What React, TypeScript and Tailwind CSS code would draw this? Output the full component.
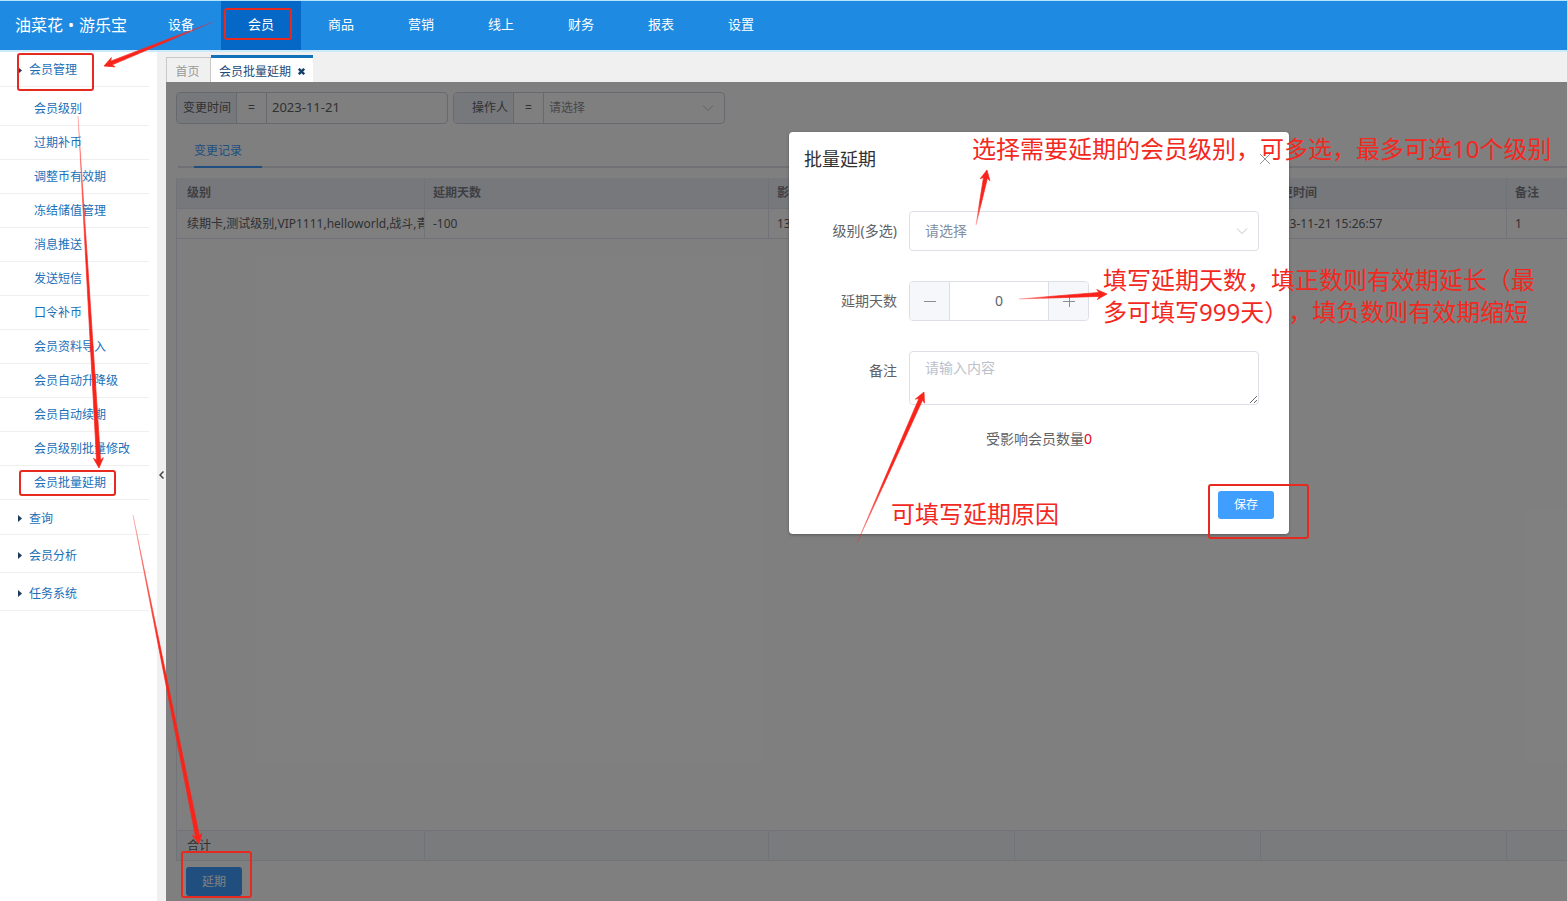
import { useState } from "react";

interface Column {
    title: string;
    width: number;
    value: string;
}

interface Point {
    x: number;
    y: number;
}

interface Box {
    x: number;
    y: number;
    width: number;
    height: number;
}

const navItems = ["设备", "会员", "商品", "营销", "线上", "财务", "报表", "设置"];

const memberMenu = [
    "会员级别",
    "过期补币",
    "调整币有效期",
    "冻结储值管理",
    "消息推送",
    "发送短信",
    "口令补币",
    "会员资料导入",
    "会员自动升降级",
    "会员自动续期",
    "会员级别批量修改",
    "会员批量延期",
];

const columns: Column[] = [
    { title: "级别", width: 248, value: "续期卡,测试级别,VIP1111,helloworld,战斗,青" },
    { title: "延期天数", width: 344, value: "-100" },
    { title: "影响会员数", width: 246, value: "13" },
    { title: "操作人", width: 246, value: "" },
    { title: "变更时间", width: 246, value: "2023-11-21 15:26:57" },
    { title: "备注", width: 246, value: "1" },
];

const boxes: Box[] = [
    { x: 225, y: 9, width: 66, height: 30 },
    { x: 18, y: 54, width: 75, height: 36 },
    { x: 20, y: 471, width: 95, height: 24 },
    { x: 182, y: 852, width: 69, height: 45 },
    { x: 1209, y: 485, width: 99, height: 53 },
];

const arrows: { from: Point; to: Point }[] = [
    { from: { x: 213, y: 22 }, to: { x: 104, y: 66 } },
    { from: { x: 78, y: 116 }, to: { x: 99, y: 468 } },
    { from: { x: 133, y: 515 }, to: { x: 199, y: 844 } },
    { from: { x: 976, y: 225 }, to: { x: 987, y: 170 } },
    { from: { x: 1019, y: 299 }, to: { x: 1107, y: 294 } },
    { from: { x: 857, y: 543 }, to: { x: 924, y: 392 } },
];

function Chevron({ className }: { className: string }) {
    return (
        <svg className={`pointer-events-none absolute h-3 w-3 ${className}`} viewBox="0 0 12 12" fill="none" stroke="#c0c4cc">
            <path d="M1 3.5 6 8.5 11 3.5" />
        </svg>
    );
}

// Tapered arrow: a sharp tail that widens up to a barbed head
function Arrow({ id, from, to }: { id: string; from: Point; to: Point }) {
    const length = Math.hypot(to.x - from.x, to.y - from.y);
    const ux = (to.x - from.x) / length;
    const uy = (to.y - from.y) / length;
    const at = (back: number, side: number) => `${to.x - ux * back - uy * side},${to.y - uy * back + ux * side}`;
    const points = [`${from.x},${from.y}`, at(8, 2), at(10, 5), at(0, 0), at(10, -5), at(8, -2)].join(" ");

    return (
        <>
            <linearGradient id={id} gradientUnits="userSpaceOnUse" x1={from.x} y1={from.y} x2={to.x} y2={to.y}>
                <stop offset="0" stopColor="#f8241b" stopOpacity="0.25" />
                <stop offset="0.4" stopColor="#f8241b" />
            </linearGradient>
            <polygon points={points} fill={`url(#${id})`} stroke={`url(#${id})`} strokeWidth="0.7" />
        </>
    );
}

function Annotations() {
    const noteClass = "absolute whitespace-nowrap text-2xl leading-8 text-[#f3281e] [text-spacing-trim:space-all]";

    return (
        <div className="pointer-events-none absolute inset-0 overflow-hidden">
            <svg className="absolute inset-0 h-full w-full">
                {boxes.map((b) => (
                    <rect key={`${b.x}-${b.y}`} {...b} rx="2" fill="none" stroke="#e62a20" strokeWidth="2" />
                ))}
                {arrows.map((a, i) => (
                    <Arrow key={i} id={`arrow-${i}`} from={a.from} to={a.to} />
                ))}
            </svg>
            <p className={`${noteClass} left-[972px] top-[133px]`}>选择需要延期的会员级别，可多选，最多可选10个级别</p>
            <p className={`${noteClass} left-[1103px] top-[264px]`}>
                填写延期天数，填正数则有效期延长（最
                <br />
                多可填写999天），填负数则有效期缩短
            </p>
            <p className={`${noteClass} left-[891px] top-[498px]`}>可填写延期原因</p>
        </div>
    );
}

function Header() {
    return (
        <header className="flex h-[50px] shrink-0 border-t border-[#b5e4fa] bg-[#1e8ae2] text-white">
            <div className="flex w-[141px] items-center gap-[5px] pb-0.5 pl-[15px] text-base">
                <span>油菜花</span>
                <span>•</span>
                <span>游乐宝</span>
            </div>
            <nav className="flex text-[13px]">
                {navItems.map((item) => (
                    <a
                        key={item}
                        href="#"
                        className={`flex w-20 items-center justify-center pb-0.5 ${item === "会员" ? "bg-[#0668c6]" : ""}`}
                    >
                        {item}
                    </a>
                ))}
            </nav>
        </header>
    );
}

function MenuGroup({ title, className }: { title: string; className: string }) {
    return (
        <a href="#" className={`flex items-center gap-[7px] border-b border-[#efefef] pl-[18px] ${className}`}>
            <svg className="h-[7px] w-1" viewBox="0 0 4 7" fill="#1c3c5a">
                <path d="M0 0 4 3.5 0 7Z" />
            </svg>
            {title}
        </a>
    );
}

function Sidebar() {
    return (
        <aside className="w-[157px] shrink-0 bg-white pr-2 text-[#1a6fb8]">
            <MenuGroup title="会员管理" className="h-[35px] pt-0.5" />
            <ul className="pb-px pt-[5px]">
                {memberMenu.map((item) => (
                    <li key={item} className="h-[34px] border-b border-[#efefef]">
                        <a href="#" className="flex h-full items-center pl-[34px]">
                            {item}
                        </a>
                    </li>
                ))}
            </ul>
            <MenuGroup title="查询" className="h-[34px] pt-0.5" />
            <MenuGroup title="会员分析" className="h-[38px] pt-1" />
            <MenuGroup title="任务系统" className="h-[38px] pt-1" />
        </aside>
    );
}

function Filters() {
    const groupClass = "flex h-8 w-[272px] overflow-hidden rounded border border-[#cfd3de]";
    const labelClass = "flex w-[60px] items-center justify-end border-r border-[#cfd3de] bg-[#eef0f7] pr-[5px]";
    const equalClass = "flex w-[30px] items-center justify-center border-r border-[#cfd3de]";

    return (
        <div className="flex gap-[5px]">
            <div className={groupClass}>
                <label htmlFor="change-date" className={labelClass}>变更时间</label>
                <span className={equalClass}>=</span>
                <input id="change-date" defaultValue="2023-11-21" className="min-w-0 flex-1 px-[5px] text-[13px] outline-none" />
            </div>
            <div className={groupClass}>
                <label htmlFor="operator" className={labelClass}>操作人</label>
                <span className={equalClass}>=</span>
                <div className="relative flex-1">
                    <select id="operator" className="h-full w-full appearance-none px-[5px] text-[#8c8f96] outline-none">
                        <option>请选择</option>
                    </select>
                    <Chevron className="right-[10px] top-[9px]" />
                </div>
            </div>
        </div>
    );
}

function RecordTable() {
    const cellClass = "truncate border-b border-r border-[#e4e7f0] text-left text-clip pl-2 first:pl-[10px]";

    return (
        <div className="min-h-0 flex-1 overflow-hidden border-l border-[#e4e7f0]">
            <table className="h-full w-[1576px] table-fixed border-separate border-spacing-0">
                <colgroup>
                    {columns.map((c) => (
                        <col key={c.title} style={{ width: c.width }} />
                    ))}
                </colgroup>
                <thead className="bg-[#eef0f8] text-[#7d8087]">
                    <tr className="h-[31px]">
                        {columns.map((c) => (
                            <th key={c.title} className={`${cellClass} font-bold`}>{c.title}</th>
                        ))}
                    </tr>
                </thead>
                <tbody>
                    <tr className="h-[30px]">
                        {columns.map((c) => (
                            <td key={c.title} className={cellClass}>{c.value}</td>
                        ))}
                    </tr>
                    <tr>
                        <td colSpan={columns.length} className="border-b border-[#e4e7f0]" />
                    </tr>
                </tbody>
                <tfoot className="bg-[#f5f7fa]">
                    <tr className="h-[30px]">
                        {columns.map((c, i) => (
                            <td key={c.title} className={cellClass}>{i === 0 ? "合计" : ""}</td>
                        ))}
                    </tr>
                </tfoot>
            </table>
        </div>
    );
}

function ExtendDialog() {
    const [days, setDays] = useState(0);

    const labelClass = "w-[120px] shrink-0 pr-3 text-right leading-10 text-[#606266]";
    const stepClass = "flex w-10 items-center justify-center bg-[#f5f7fa] text-[#8b8e95]";

    return (
        <div
            role="dialog"
            aria-labelledby="dialog-title"
            className="absolute left-[623px] top-[50px] w-[500px] rounded-sm bg-white pb-[15px] text-sm text-[#606266] shadow-[0_1px_3px_rgba(0,0,0,0.3)]"
        >
            <div className="flex items-center justify-between px-[15px] pt-[15px]">
                <h2 id="dialog-title" className="text-lg leading-6 text-[#303133]">批量延期</h2>
                <button type="button" aria-label="关闭" className="mr-[3px]">
                    <svg className="h-3 w-3" viewBox="0 0 12 12" fill="none" stroke="#909399">
                        <path d="M1 1 11 11M11 1 1 11" />
                    </svg>
                </button>
            </div>

            <form className="pr-[30px] pt-10" onSubmit={(e) => e.preventDefault()}>
                {/* Level */}
                <div className="mb-[30px] flex">
                    <label htmlFor="level" className={labelClass}>级别(多选)</label>
                    <div className="relative flex-1">
                        <select
                            id="level"
                            className="h-10 w-full appearance-none rounded border border-[#dcdfe6] px-[15px] text-[#8390a2] outline-none"
                        >
                            <option>请选择</option>
                        </select>
                        <Chevron className="right-[11px] top-[14px]" />
                    </div>
                </div>

                {/* Days */}
                <div className="mb-[30px] flex">
                    <label htmlFor="days" className={labelClass}>延期天数</label>
                    <div className="flex h-10 w-[180px] overflow-hidden rounded border border-[#dcdfe6]">
                        <button type="button" aria-label="减少" onClick={() => setDays(days - 1)} className={`${stepClass} border-r border-[#dcdfe6]`}>
                            <svg className="h-3 w-3" viewBox="0 0 12 12" stroke="currentColor">
                                <path d="M0 6.5H12" />
                            </svg>
                        </button>
                        <input
                            id="days"
                            inputMode="numeric"
                            value={days}
                            onChange={(e) => setDays(parseInt(e.target.value) || 0)}
                            className="min-w-0 flex-1 text-center outline-none"
                        />
                        <button type="button" aria-label="增加" onClick={() => setDays(days + 1)} className={`${stepClass} border-l border-[#dcdfe6]`}>
                            <svg className="h-3 w-3" viewBox="0 0 12 12" stroke="currentColor">
                                <path d="M0 6.5H12M6.5 0V12" />
                            </svg>
                        </button>
                    </div>
                </div>

                {/* Remark */}
                <div className="flex">
                    <label htmlFor="remark" className={labelClass}>备注</label>
                    <textarea
                        id="remark"
                        placeholder="请输入内容"
                        className="h-[54px] min-w-0 flex-1 resize-y rounded border border-[#dcdfe6] px-[15px] py-1 leading-6 outline-none placeholder:text-[#bcc1cc]"
                    />
                </div>
            </form>

            <p className="mt-[22px] text-center leading-6">
                受影响会员数量<span className="text-[#e60012]">0</span>
            </p>

            <div className="mt-10 flex justify-end pr-[15px]">
                <button type="button" className="h-7 w-14 rounded-[3px] bg-[#409eff] text-xs text-white">保存</button>
            </div>
        </div>
    );
}

export default function App() {
    return (
        <div className="relative flex h-screen flex-col overflow-hidden bg-white font-['Noto_Sans','Noto_Sans_CJK_SC',sans-serif] text-xs text-[#606266]">
            <Header />
            <div className="flex min-h-0 flex-1 border-t-2 border-[#cdeafa]">
                <Sidebar />
                <button type="button" aria-label="收起菜单" className="flex w-[9px] shrink-0 items-center justify-center bg-[#f0f0f0] pb-[3px]">
                    <svg className="h-2 w-[5px]" viewBox="0 0 5 8" fill="none" stroke="#444" strokeWidth="1.5">
                        <path d="M4.5 0.5 1 4 4.5 7.5" />
                    </svg>
                </button>

                <main className="flex min-w-0 flex-1 flex-col">
                    <div className="flex h-[30px] shrink-0 items-end bg-[#f0f0f0]">
                        <a href="#" className="flex h-[25px] w-[45px] items-center justify-center border border-b-0 border-[#c8c8c8] pr-0.5 pt-1 text-[#999]">
                            首页
                        </a>
                        <div className="flex h-[27px] w-[102px] items-center justify-center gap-[7px] border-t-[3px] border-[#1272b9] bg-white pt-1 text-[#1d4b7a]">
                            <a href="#">会员批量延期</a>
                            <button type="button" aria-label="关闭标签" className="pb-0.5">
                                <svg className="h-[7px] w-[7px]" viewBox="0 0 7 7" stroke="#17406b" strokeWidth="2.4">
                                    <path d="M0.8 0.8 6.2 6.2M6.2 0.8 0.8 6.2" />
                                </svg>
                            </button>
                        </div>
                    </div>

                    <div className="relative flex min-h-0 flex-1 flex-col bg-white pb-[5px] pl-[10px] pt-[10px]">
                        <Filters />
                        <div className="mb-[10px] ml-0.5 mt-[10px] flex h-[34px] border-b-2 border-[#dfe2ea]">
                            <a href="#" className="-mb-0.5 ml-4 flex w-[68px] items-center border-b-2 border-[#409eff] pt-0.5 text-[#409eff]">
                                变更记录
                            </a>
                        </div>
                        <RecordTable />
                        <div className="pl-[10px] pt-1.5">
                            <button type="button" className="h-[29px] w-14 rounded-[3px] bg-[#409eff] text-white">延期</button>
                        </div>

                        <div className="absolute inset-0 bg-black/50" />
                        <ExtendDialog />
                    </div>
                </main>
            </div>
            <Annotations />
        </div>
    );
}
